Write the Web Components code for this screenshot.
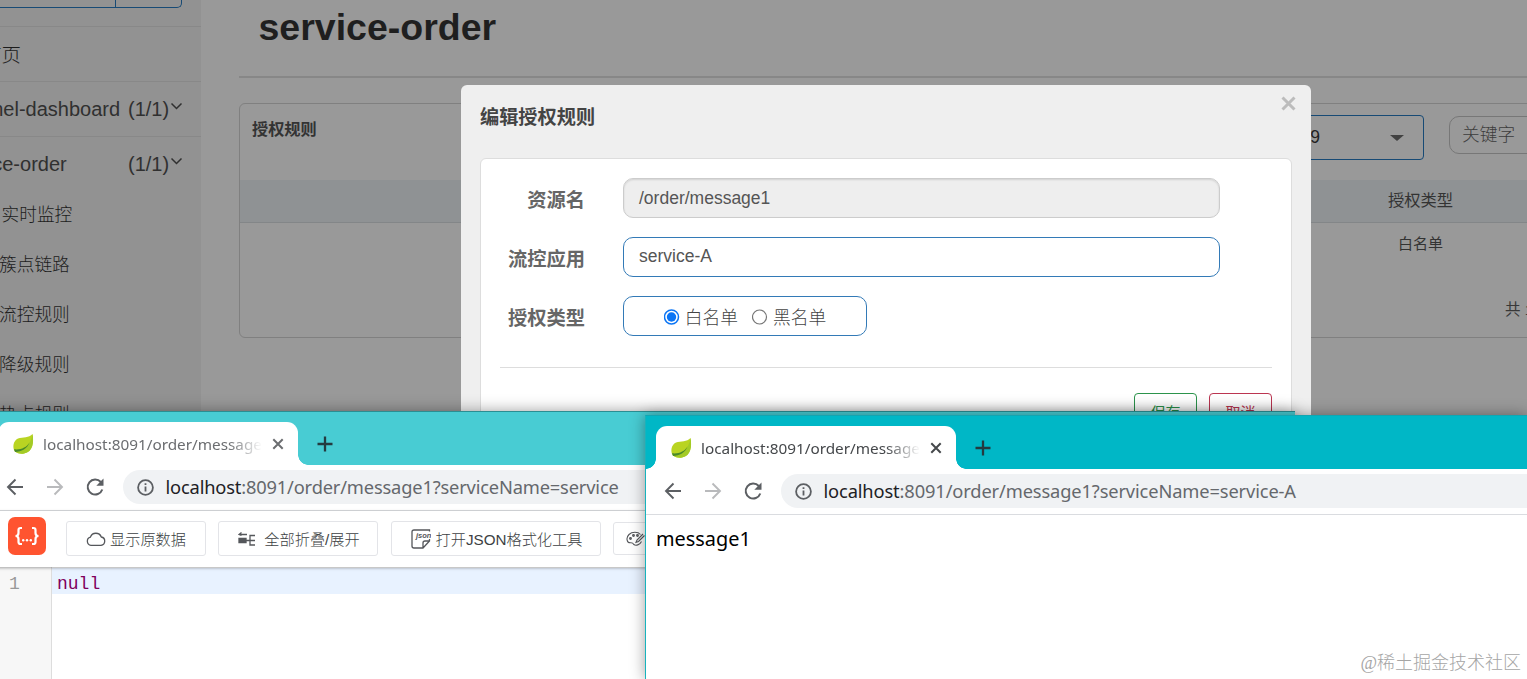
<!DOCTYPE html>
<html lang="zh-CN">
<head>
<meta charset="utf-8">
<title>service-order</title>
<style>
  html, body { margin: 0; height: 100%; overflow: hidden; }
  body {
    position: relative;
    background: #999;
    font-family: "Liberation Sans", "Noto Sans CJK SC", sans-serif;
    font-size: 17.5px;
    color: #333;
  }
  rule-dialog { position: absolute; left: 461px; top: 85px; }
  browser-window { bottom: 0; }
  browser-window.back { position: absolute; left: -13px; top: 411px; width: 1308px; --url-space: -0.17px; }
  browser-window.front { position: absolute; left: 645px; top: 415px; right: 0; --url-space: -0.13px; }
  .mark {
    position: absolute; right: 6px; bottom: 3px;
    font: 300 18px/26px "Liberation Serif", "Noto Sans CJK SC", serif;
    color: #a5a5a5;
  }
</style>
</head>
<body>
<dash-layout>
  <dash-sidebar slot="side">
    <nav-item label="首页"></nav-item>
    <nav-item label="sentinel-dashboard" count="(1/1)"></nav-item>
    <nav-item label="service-order" count="(1/1)"></nav-item>
    <nav-item sub first label="实时监控"></nav-item>
    <nav-item sub label="簇点链路"></nav-item>
    <nav-item sub label="流控规则"></nav-item>
    <nav-item sub label="降级规则"></nav-item>
    <nav-item sub label="热点规则"></nav-item>
  </dash-sidebar>
  <rule-list></rule-list>
</dash-layout>

<rule-dialog>
  <form-row label="资源名"><text-box disabled>/order/message1</text-box></form-row>
  <form-row label="流控应用"><text-box>service-A</text-box></form-row>
  <form-row label="授权类型">
    <text-box radios><radio-dot checked>白名单</radio-dot><radio-dot>黑名单</radio-dot></text-box>
  </form-row>
</rule-dialog>

<browser-window class="back" tab="localhost:8091/order/message1" path=":8091/order/message1?serviceName=service">
  <json-page></json-page>
</browser-window>
<browser-window class="front" active tab="localhost:8091/order/message1" path=":8091/order/message1?serviceName=service-A">
  <plain-page>message1</plain-page>
</browser-window>
<div class="mark">@稀土掘金技术社区</div>

<script>
class BaseElement extends HTMLElement {
  connectedCallback() {
    if (this.shadowRoot) return;
    this.attachShadow({ mode: 'open' });
    this.shadowRoot.innerHTML = this.render();
  }
}

class DashLayout extends BaseElement {
  render() {
    return `
      <style>
        :host { display: grid; grid-template-columns: 201px 1fr; height: 100%; background: #999; overflow: hidden; }
      </style>
      <slot name="side"></slot>
      <slot></slot>
    `;
  }
}

class DashSidebar extends BaseElement {
  render() {
    return `
      <style>
        :host { display: block; background: #929292; overflow: hidden; min-width: 0; }
        .search { display: flex; height: 26px; box-sizing: border-box; }
        .field, .btn {
          height: 8px; box-sizing: border-box;
          border-bottom: 1px solid #174a75; border-right: 1px solid #174a75;
        }
        .field { width: 116px; }
        .btn { width: 66px; border-radius: 0 0 5px 0; }
      </style>
      <div class="search"><div class="field"></div><div class="btn"></div></div>
      <slot></slot>
    `;
  }
}

class NavItem extends BaseElement {
  render() {
    const count = this.getAttribute('count');
    return `
      <style>
        :host {
          display: flex; align-items: center; box-sizing: border-box; height: 55px;
          border-top: 1px solid #888; font-size: 20px; white-space: nowrap; color: #303030;
        }
        :host([sub]) { height: 50px; border: 0; font-size: 17.7px; font-weight: 300; color: #1c1c1c; }
        :host([sub][first]) { margin-top: -3px; }
        :host([sub]) .name { margin-left: -1px; }
        :host([sub][first]) .name { margin-left: 1.5px; }
        .name { width: 178px; margin-left: -50px; }
        :host(:not([count]):not([sub])) .name { margin: -2px 0 0 -18px; font-size: 19.5px; font-weight: 300; color: #1c1c1c; }
        svg { margin: -6px 0 0 0.5px; }
      </style>
      <span class="name">${this.getAttribute('label')}</span>
      ${count ? `<span>${count}</span>
      <svg width="13" height="9" viewBox="0 0 13 9"><path d="M1.500 1.500l5 5 5-5" fill="none" stroke="#303030" stroke-width="1.500"/></svg>` : ''}
    `;
  }
}

class RuleList extends BaseElement {
  render() {
    return `
      <style>
        :host { display: block; padding-left: 38px; min-width: 0; overflow: hidden; white-space: nowrap; }
        h1 { margin: 0; padding: 5px 0 0 19.5px; height: 71px; font-size: 37.5px; line-height: 44px; color: #1f1f1f; }
        hr { margin: 0 0 26px; border: 0; height: 2px; background: #878787; }
        .card { width: 1400px; height: 235px; box-sizing: border-box; border: 1px solid #808080; border-radius: 6px; margin-top: -1px; }
        .head { display: flex; height: 76px; }
        .head > * { flex: none; box-sizing: border-box; }
        .title { width: 938px; padding: 13px 0 0 12px; font-size: 16.2px; line-height: 24px; font-weight: bold; color: #333; }
        .select {
          width: 246px; height: 45px; margin-top: 11px;
          border: 1px solid #174a75; border-radius: 4px; color: #222;
          display: flex; align-items: center; justify-content: flex-end; gap: 70px; padding-right: 19px;
        }
        .arrow { border: 7px solid transparent; border-top: 6px solid #424242; border-bottom: 0; }
        .keyword {
          margin: 12px 0 0 25px; width: 200px; height: 38px;
          border: 1px solid #777; border-radius: 10px; padding-left: 12px; line-height: 36px;
          font-weight: 300; font-size: 17.7px; color: #3c3c3c;
        }
        .row { display: flex; height: 42px; line-height: 41px; font-size: 16.3px; }
        .row.th { background: #8f9294; border-bottom: 1px solid #838688; }
        .row span { margin-left: 1148px; }
        .row.td { font-size: 15px; }
        .row.td span { margin-left: 1158px; }
        .total { margin: 22px 0 0 1265px; font-size: 15.5px; line-height: 46px; color: #383838; }
      </style>
      <h1>service-order</h1>
      <hr>
      <div class="card">
        <div class="head">
          <div class="title">授权规则</div>
          <div class="select"><span>9</span><i class="arrow"></i></div>
          <div class="keyword">关键字</div>
        </div>
        <div class="row th"><span>授权类型</span></div>
        <div class="row td"><span>白名单</span></div>
        <div class="total">共 1</div>
      </div>
    `;
  }
}

class RuleDialog extends BaseElement {
  render() {
    return `
      <style>
        :host { display: block; width: 850px; height: 500px; box-sizing: border-box; background: #efefef; border-radius: 6px; padding: 0 19px; }
        header { display: flex; justify-content: space-between; height: 73px; }
        .title { margin-top: 19px; font-size: 19.2px; line-height: 28px; font-weight: bold; color: #444; }
        svg { margin: 11px -4px 0 0; }
        .panel { background: #fff; border: 1px solid #ddd; border-radius: 6px; height: 440px; box-sizing: border-box; padding: 19px 19px 0; }
        hr { border: 0; height: 1px; margin: 31px 0 25px; background: #ddd; }
        .actions { display: flex; justify-content: flex-end; gap: 12px; }
        .actions span {
          width: 63px; height: 38px; box-sizing: border-box; border: 1px solid; border-radius: 4px;
          text-align: center; font-size: 15px; line-height: 38px;
        }
        .save { color: #2b934b; }
        .cancel { color: #bb3551; }
      </style>
      <header>
        <div class="title">编辑授权规则</div>
        <svg width="15" height="15" viewBox="0 0 15 15"><path d="M1.500 1.500l12 12M13.500 1.500l-12 12" stroke="#bcbcbc" stroke-width="3"/></svg>
      </header>
      <div class="panel">
        <slot></slot>
        <hr>
        <div class="actions"><span class="save">保存</span><span class="cancel">取消</span></div>
      </div>
    `;
  }
}

class FormRow extends BaseElement {
  render() {
    return `
      <style>
        :host { display: flex; gap: 38px; height: 40px; margin-bottom: 19px; }
        :host(:last-of-type) { margin-bottom: 0; }
        label { width: 85px; text-align: right; font-size: 19.3px; line-height: 45px; font-weight: bold; color: #666; }
      </style>
      <label>${this.getAttribute('label')}</label>
      <slot></slot>
    `;
  }
}

class TextBox extends BaseElement {
  render() {
    return `
      <style>
        :host {
          display: block; width: 597px; height: 40px; box-sizing: border-box;
          border: 1px solid #337ab7; border-radius: 10px; background: #fff;
          padding: 0 15px; line-height: 37px; font-size: 17.5px; color: #555;
        }
        :host([disabled]) { background: #eee; border-color: #ccc; line-height: 39px; box-shadow: inset 0 1px 2px rgba(0,0,0,.12); }
        :host([radios]) { display: flex; width: 244px; justify-content: center; gap: 14px; padding: 0; line-height: 43px; }
      </style>
      <slot></slot>
    `;
  }
}

class RadioDot extends BaseElement {
  render() {
    const on = this.hasAttribute('checked');
    return `
      <style>
        :host { display: flex; gap: 5px; font-size: 17.8px; font-weight: 300; color: #444; }
        svg { margin-top: 12px; }
      </style>
      <svg width="16" height="16" viewBox="0 0 16 16">
        <circle cx="7.500" cy="8" r="7" fill="#fff" stroke="${on ? '#0b75f5' : '#767676'}" stroke-width="${on ? 1.5 : 1.2}"/>
        ${on ? '<circle cx="7.500" cy="8" r="4.700" fill="#0b75f5"/>' : ''}
      </svg>
      <span><slot></slot></span>
    `;
  }
}

class BrowserWindow extends BaseElement {
  render() {
    return `
      <style>
        :host {
          --strip: #48ccd3; --ink: #5c5f63; --title: #6b6d70;
          display: flex; flex-direction: column; box-sizing: border-box; overflow: hidden;
          border-top: 1px solid #2a8e93; border-left: 1px solid #17b3bd; background: #fff;
          box-shadow: 0 0 14px rgba(0,0,0,.38);
          font-family: "Noto Sans", "Noto Sans CJK SC", sans-serif;
        }
        :host([active]) { --strip: #00b7c6; --title: #45484b; border-top-color: #12a5b1; }
        .strip { display: flex; flex: none; height: 53px; background: var(--strip); align-items: flex-end; }
        .tab {
          display: flex; align-items: center; box-sizing: border-box; width: 300px; height: 43px; margin-left: 10px;
          padding: 0 14px; background: #fff; border-radius: 11px 11px 0 0; position: relative; color: var(--title);
        }
        .tab::before, .tab::after { content: ""; position: absolute; bottom: 0; width: 10px; height: 10px; }
        .tab::before { left: -10px; background: radial-gradient(circle at 0 0, transparent 9.5px, #fff 10px); }
        .tab::after { right: -10px; background: radial-gradient(circle at 100% 0, transparent 9.5px, #fff 10px); }
        .name {
          width: 219px; margin: 0 10px 0 9px; overflow: hidden; white-space: nowrap; font-size: 15.3px; line-height: 24px;
          -webkit-mask-image: linear-gradient(90deg, #000 185px, transparent 219px);
          mask-image: linear-gradient(90deg, #000 185px, transparent 219px);
        }
        .plus { margin: 0 0 13px 19px; }
        .bar { display: flex; flex: none; align-items: center; height: 46px; border-bottom: 1px solid #dadce0; padding: 0 0 1px 18px; box-sizing: border-box; }
        .bar svg { flex: none; margin-right: 21.5px; margin-top: -1px; }
        .omni {
          display: flex; align-items: center; flex: 1; height: 34px; margin-left: -4px; background: #f0f2f4;
          border-radius: 17px 0 0 17px; padding-left: 14px; white-space: nowrap; font-size: 18.3px; color: #65686c;
        }
        .omni svg { margin: 0 12px 0 0; }
        .omni b { font-weight: normal; color: #202124; }
        .url { letter-spacing: var(--url-space, 0); margin-top: -1px; }
      </style>
      <div class="strip">
        <div class="tab">
          <svg width="22" height="22" viewBox="0 0 22 22">
            <path d="M20.500 1C22 9 21 19 12 20.500 8 21.200 4 20 2.500 18 .5 14 1 8 6 5.500 11 4 17 5 20.500 1z" fill="#b9d422"/>
            <path d="M20.500 1C22 9 21 19 12 20.500 9 21 5.500 20.400 3.500 18.800 13 18 18.500 12 20.500 1z" fill="#a3cb26"/>
            <path d="M2 16.300C9 17 14.500 14.500 17.500 9.500 15.500 15.500 9.500 18.800 3 19z" fill="#4a8a2a"/>
          </svg>
          <span class="name">${this.getAttribute('tab')}</span>
          <svg width="12" height="12" viewBox="0 0 12 12"><path d="M1.300 1.300l9.400 9.400M10.700 1.300l-9.400 9.400" stroke="var(--title)" stroke-width="2"/></svg>
        </div>
        <svg class="plus" width="16" height="16" viewBox="0 0 16 16"><path d="M8 .5v15M.5 8h15" stroke="#243b40" stroke-width="2.300"/></svg>
      </div>
      <div class="bar">
        <svg width="18" height="18" viewBox="0 0 18 18"><path d="M17 9H2.500M9.500 1.500L2 9l7.500 7.500" fill="none" stroke="var(--ink)" stroke-width="1.900"/></svg>
        <svg width="18" height="18" viewBox="0 0 18 18"><path d="M1 9h14.500M8.500 1.500L16 9l-7.500 7.500" fill="none" stroke="#b9babc" stroke-width="1.900"/></svg>
        <svg width="20" height="20" viewBox="0 0 20 20"><path d="M17.300 12.500A7.500 7.500 0 1 1 15.800 5" fill="none" stroke="var(--ink)" stroke-width="2"/><path d="M18.500 1.500v7.200h-7.200z" fill="var(--ink)"/></svg>
        <div class="omni">
          <svg width="17" height="17" viewBox="0 0 17 17"><circle cx="8.500" cy="8.500" r="7.400" fill="none" stroke="var(--ink)" stroke-width="1.800"/><path d="M8.500 7.500v5M8.500 4.200v1.900" stroke="var(--ink)" stroke-width="1.800"/></svg>
          <span class="url"><b>localhost</b>${this.getAttribute('path')}</span>
        </div>
      </div>
      <slot></slot>
    `;
  }
}

class JsonPage extends BaseElement {
  render() {
    return `
      <style>
        :host { display: flex; flex-direction: column; flex: 1; font-size: 15.2px; color: #3d3f43; }
        .tools {
          display: flex; align-items: center; gap: 12px; height: 56px; padding-left: 20px;
          position: relative; background: #fff; box-shadow: 0 1px 3px rgba(0,0,0,.35);
        }
        .logo { width: 38px; height: 38px; margin: -6px 8px 0 0; flex: none; }
        .btn {
          display: flex; align-items: center; justify-content: center; gap: 4px; box-sizing: border-box;
          height: 35px; border: 1px solid #e3e4e8; border-radius: 3px; white-space: nowrap; margin-top: -1px;
          font-family: "Liberation Sans", "Noto Sans CJK SC", sans-serif; font-weight: 300;
        }
        .btn span { margin-top: -2px; }
        .btn svg { fill: none; stroke: #55575b; stroke-width: 1.3; flex: none; }
        .editor { flex: 1; display: grid; grid-template-columns: 64px 1fr; font: 18px/26px "Liberation Mono", monospace; }
        .gutter { background: #f7f7f7; border-right: 1px solid #ddd; box-sizing: border-box; padding: 4px 0 0 21px; color: #999; }
        .line { height: 26px; background: #e8f2ff; margin-top: 1px; padding: 3px 0 0 5px; box-sizing: border-box; color: #80005c; }
      </style>
      <div class="tools">
        <svg class="logo" viewBox="0 0 38 38">
          <rect width="38" height="38" rx="7" fill="#ff5430"/>
          <g fill="none" stroke="#fff" stroke-width="2.200">
            <path d="M14 11h-1.500q-2 0-2 2v3q0 3-3 3 3 0 3 3v3q0 2 2 2H14M24 11h1.500q2 0 2 2v3q0 3 3 3-3 0-3 3v3q0 2-2 2H24"/>
          </g>
          <g fill="#fff"><circle cx="15.200" cy="23.300" r="1.200"/><circle cx="19" cy="23.300" r="1.200"/><circle cx="22.800" cy="23.300" r="1.200"/></g>
        </svg>
        <div class="btn" style="width:140px">
          <svg width="20" height="16" viewBox="0 0 20 16"><path d="M5 14.300a4.200 4.200 0 0 1-.6-8.200A5.800 5.800 0 0 1 15.300 6 4.200 4.200 0 0 1 15 14.300z"/></svg>
          <span>显示原数据</span>
        </div>
        <div class="btn" style="width:160px;gap:8px;padding-left:2px">
          <svg width="18" height="14" viewBox="0 0 18 14"><path d="M1 2.500h8M3.500.5L1 2.500l2.500 1"/><path d="M1 6.500h7v4H1z" fill="#55575b"/><path d="M8 8.500h9M17 3.500h-5v9.500h5"/></svg>
          <span>全部折叠/展开</span>
        </div>
        <div class="btn" style="width:210px;gap:5px;margin-left:1px;padding-left:1px">
          <svg width="20" height="20" viewBox="0 0 20 20">
            <path d="M4.500 1H3Q1 1 1 3v14q0 2 2 2h9l6.500-7V10M12 19v-5q0-2 2-2h4.500M4.500 1H18.500v1.500"/>
            <text x="5" y="9" font-family="Liberation Sans" font-size="7.500" font-weight="bold" font-style="italic" fill="#55575b" stroke="none">json</text>
          </svg>
          <span>打开JSON格式化工具</span>
        </div>
        <div class="btn" style="width:130px;height:33px;justify-content:flex-start;padding-left:12px">
          <svg width="20" height="16" viewBox="0 0 20 16"><path d="M14.500 3.500C12 .5 6 .5 3 3.500-.5 7 1 12 4.500 11.800c2.200-.2 2.700.6 3.300 1.700 2 1.500 6 .5 7.700-3M17 3L11 9l-1 2.300 2.500-.8 6-6" stroke-width="1.100"/><circle cx="4.500" cy="7.500" r=".8"/><circle cx="7.500" cy="4.500" r=".8"/><circle cx="11.500" cy="4.500" r=".8"/></svg>
        </div>
      </div>
      <div class="editor">
        <div class="gutter">1</div>
        <div class="line">null</div>
      </div>
    `;
  }
}

class PlainPage extends BaseElement {
  render() {
    return `
      <style>
        :host { display: block; padding: 10px; font-size: 19.9px; line-height: 27px; color: #000; }
      </style>
      <slot></slot>
    `;
  }
}

customElements.define('dash-layout', DashLayout);
customElements.define('dash-sidebar', DashSidebar);
customElements.define('nav-item', NavItem);
customElements.define('rule-list', RuleList);
customElements.define('rule-dialog', RuleDialog);
customElements.define('form-row', FormRow);
customElements.define('text-box', TextBox);
customElements.define('radio-dot', RadioDot);
customElements.define('browser-window', BrowserWindow);
customElements.define('json-page', JsonPage);
customElements.define('plain-page', PlainPage);
</script>
</body>
</html>
